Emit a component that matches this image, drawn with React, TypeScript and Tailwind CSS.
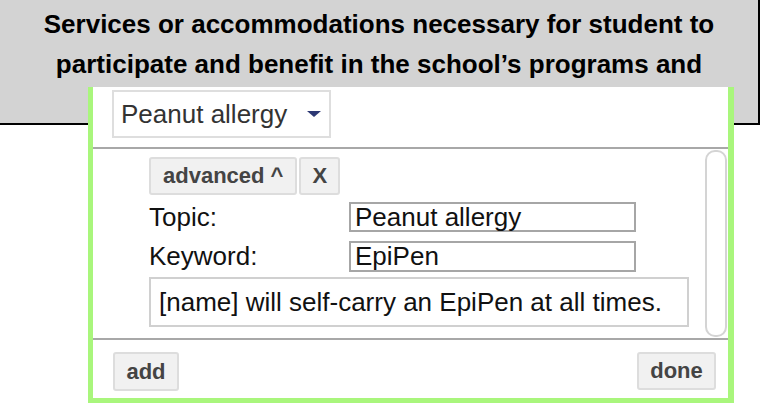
export default function App() {
  return (
    <div className="w-[760px] h-[406px] overflow-hidden bg-white font-['Liberation_Sans',Arial,sans-serif]">
      <div className="h-[125px] bg-[#d3d3d3] border-r-2 border-b-2 border-black pt-[4px] text-center text-[26px] leading-[40px] font-bold text-black">
        <p>Services or accommodations necessary for student to</p>
        <p>participate and benefit in the school’s programs and</p>
      </div>

      <div className="relative -mt-[38px] ml-[88px] w-[646px] h-[316px] bg-white border-l-[5px] border-r-[6px] border-b-[5px] border-[#a9f67c] flex flex-col">
        <div className="h-[62px] shrink-0 border-b-2 border-[#a8a8a8] pt-[3px] pl-[19px]">
          <div className="w-[219px] h-[48px] border-2 border-[#dedede] flex items-center pl-[7px] pr-[8px] text-[26px] text-[#333]">
            <span className="flex-1">Peanut allergy</span>
            <svg width="14" height="6" viewBox="0 0 14 6">
              <polygon points="0,0 14,0 7,6" fill="#2d3874" />
            </svg>
          </div>
        </div>

        <div className="h-[189px] shrink-0 flex">
          <div className="flex-1 pl-[56px] pt-[8px] text-[26px] text-[#111]">
            <div className="flex gap-[2px]">
              <button className="h-[38px] px-[12px] bg-[#f1f1f1] border-2 border-[#dddddd] rounded-[3px] text-[22px] leading-none font-bold text-[#444]">
                advanced ^
              </button>
              <button className="h-[38px] w-[41px] bg-[#f1f1f1] border-2 border-[#dddddd] rounded-[3px] text-[22px] leading-none font-bold text-[#444]">
                X
              </button>
            </div>
            <div className="mt-[7px] h-[30px] flex items-center leading-[30px]">
              <span className="w-[200px]">Topic:</span>
              <div className="w-[287px] h-[30px] border-2 border-[#a6a6a6] pl-[4px] leading-[26px]">Peanut allergy</div>
            </div>
            <div className="mt-[9px] h-[31px] flex items-center leading-[31px]">
              <span className="w-[200px]">Keyword:</span>
              <div className="w-[287px] h-[31px] border-2 border-[#a6a6a6] pl-[4px] leading-[27px]">EpiPen</div>
            </div>
            <div className="mt-[5px] w-[540px] h-[50px] border-2 border-[#d0d0d0] pl-[8px] flex items-center leading-none">
              [name] will self-carry an EpiPen at all times.
            </div>
          </div>
          <div className="w-[22px] my-[1px] mr-[1px] border-2 border-[#d4d4d4] rounded-[10px] bg-white" />
        </div>

        <div className="flex-1 border-t-2 border-[#a8a8a8] flex items-start justify-between pt-[12px] pl-[20px] pr-[12px]">
          <button className="h-[39px] w-[66px] bg-[#f1f1f1] border-2 border-[#dddddd] rounded-[3px] text-[22px] leading-none font-bold text-[#444]">
            add
          </button>
          <button className="h-[38px] w-[79px] bg-[#f1f1f1] border-2 border-[#dddddd] rounded-[3px] text-[22px] leading-none font-bold text-[#444]">
            done
          </button>
        </div>
      </div>
    </div>
  )
}
